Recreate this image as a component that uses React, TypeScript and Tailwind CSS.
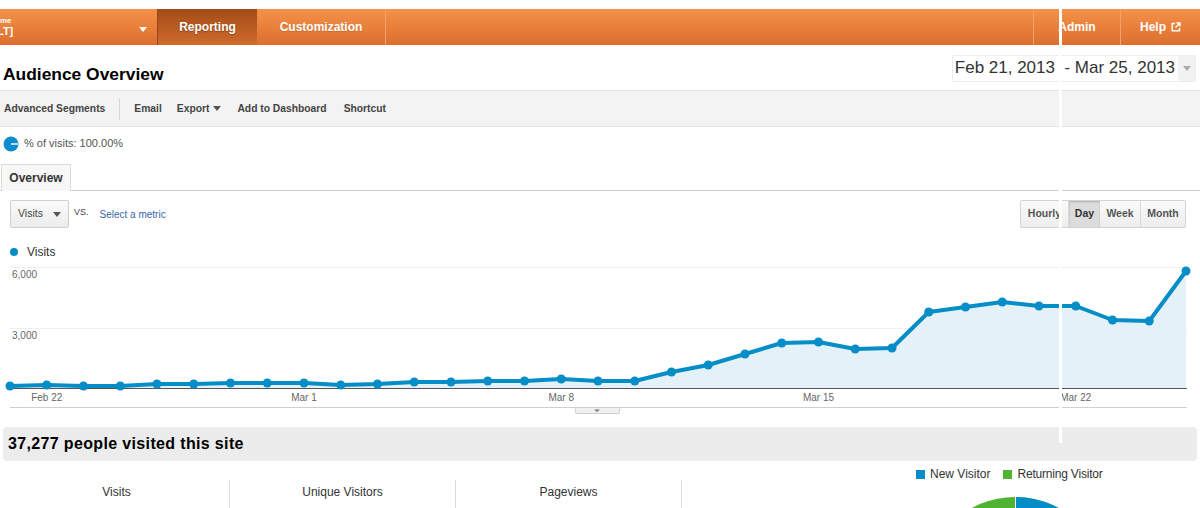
import React from "react";

const ys = [386,385,386,386,384,384,383,383,383,385,384,382,382,381,381,379,381,381,372,365,354,343,342,349,348,312,307,302,306,306,320,321,271];
const TOP = 258;
const pts = ys.map((y, i) => [10 + i * 36.75, y - TOP] as [number, number]);
const base = 388 - TOP;

function Chart() {
  const line = pts.map((p) => `${p[0].toFixed(2)},${p[1]}`).join(" ");
  const area = `10,${base} ${line} ${pts[pts.length - 1][0].toFixed(2)},${base}`;
  const xl: [string, number][] = [["Feb 22", 1], ["Mar 1", 8], ["Mar 8", 15], ["Mar 15", 22], ["Mar 22", 29]];
  return (
    <svg width="1200" height="160" className="block" style={{ fontFamily: "'Liberation Sans', Arial, sans-serif" }}>
      <line x1="10" x2="1187" y1="9.5" y2="9.5" stroke="#eeeeee" />
      <line x1="10" x2="1187" y1="70.5" y2="70.5" stroke="#eeeeee" />
      <polygon points={area} fill="#e5f1f9" />
      <line x1="10" x2="1187" y1={base + 0.5} y2={base + 0.5} stroke="#555" strokeWidth="1" />
      <polyline points={line} fill="none" stroke="#058dc7" strokeWidth="4" strokeLinejoin="round" />
      {pts.map((p, i) => (
        <circle key={i} cx={p[0]} cy={p[1]} r="4.5" fill="#058dc7" />
      ))}
      <text x="12" y="20" fontSize="10" fill="#666">6,000</text>
      <text x="12" y="81" fontSize="10" fill="#666">3,000</text>
      {xl.map(([t, i]) => (
        <text key={t} x={10 + i * 36.75} y="143" fontSize="10" fill="#666" textAnchor="middle">{t}</text>
      ))}
      <line x1="10" x2="1187" y1="149.5" y2="149.5" stroke="#cfcfcf" />
      <rect x="575.5" y="149.5" width="44" height="6" fill="#f0f0f0" stroke="#cfcfcf" rx="1" />
      <path d="M594 151.5 L600 151.5 L597 154 Z" fill="#777" />
    </svg>
  );
}

function Caret({ color = "#fff" }: { color?: string }) {
  return (
    <svg width="8" height="5" viewBox="0 0 8 5" className="block">
      <path d="M0 0 H8 L4 5 Z" fill={color} />
    </svg>
  );
}

export default function App() {
  return (
    <div className="relative w-[1200px] h-[508px] overflow-hidden bg-white font-['Liberation_Sans',Arial,sans-serif] text-[#333]">
      <div className="h-[9px]" />
      {/* Top nav */}
      <div className="h-[36px] flex bg-gradient-to-b from-[#f4914a] to-[#dc6f2d] text-white font-bold text-[12px]">
        <div className="w-[157px] relative flex items-center">
          <div className="flex flex-col leading-none">
            <span className="text-[8px]">me</span>
            <span className="text-[11px] -ml-[3px] mt-[1px]">LT]</span>
          </div>
          <div className="absolute left-[139px] top-[18px]"><Caret /></div>
        </div>
        <div className="w-[100px] flex items-center justify-center bg-gradient-to-b from-[#a24c17] to-[#d06b2c] border-l border-[#9a4714] [text-shadow:0_1px_1px_rgba(0,0,0,0.3)]">
          Reporting
        </div>
        <div className="w-[129px] flex items-center justify-center border-r border-[#f5a26a] [text-shadow:0_1px_1px_rgba(0,0,0,0.15)]">
          Customization
        </div>
        <div className="flex-1" />
        <div className="w-[87px] flex items-center justify-center border-l border-[#f5a26a]">Admin</div>
        <div className="w-[80px] flex items-center justify-center gap-[5px] border-l border-[#f5a26a]">
          <span>Help</span>
          <svg width="10" height="10" viewBox="0 0 10 10" fill="none" stroke="#fff" strokeWidth="1.4">
            <path d="M4 1.5 H1.2 V8.8 H8.5 V6" />
            <path d="M5.5 1 H9 V4.5 M9 1 L4.5 5.5" />
          </svg>
        </div>
      </div>
      {/* Title row */}
      <div className="h-[45px] flex items-center justify-between pl-[3px] pr-[4px]">
        <h1 className="text-[17.4px] font-bold text-black mt-[13px]">Audience Overview</h1>
        <div className="h-[27px] mt-[1px] flex items-stretch border border-[#ececec] rounded-[2px]">
          <span className="flex items-center pl-[2px] pr-[3px] text-[17px] text-[#333]">Feb 21, 2013&nbsp; - Mar 25, 2013</span>
          <span className="w-[17px] bg-[#f2f2f2] flex items-center justify-center"><Caret color="#aaa" /></span>
        </div>
      </div>
      {/* Toolbar */}
      <div className="h-[37px] flex items-center bg-[#f3f3f3] border-t border-b border-[#e2e2e2] text-[10.3px] font-bold text-[#444]">
        <span className="pl-[4px]">Advanced Segments</span>
        <span className="ml-[14px] w-px h-[22px] bg-[#d6d6d6]" />
        <span className="ml-[14px]">Email</span>
        <span className="ml-[15px] flex items-center gap-[4px]">Export <Caret color="#555" /></span>
        <span className="ml-[16px]">Add to Dashboard</span>
        <span className="ml-[17px]">Shortcut</span>
      </div>
      {/* Segment row */}
      <div className="h-[34px] flex items-center pl-[3px] pb-[1px]">
        <svg width="16" height="16" viewBox="0 0 16 16">
          <circle cx="8" cy="8" r="7.5" fill="#0e8ccb" />
          <rect x="8" y="7.3" width="7" height="1.4" fill="#fff" />
        </svg>
        <span className="ml-[5px] text-[11px] text-[#555]">% of visits: 100.00%</span>
      </div>
      {/* Tabs */}
      <div className="h-[27px] flex items-end border-b border-[#d0d0d0] mt-[3px]">
        <div className="ml-[1px] h-[27px] w-[70px] flex items-center justify-center border border-b-0 border-[#dcdcdc] bg-[#f7f7f7] text-[12px] font-bold text-[#333] -mb-px">
          Overview
        </div>
      </div>
      {/* Controls */}
      <div className="h-[38px] flex items-center justify-between pl-[10px] pr-[14px] pt-[8px]">
        <div className="flex items-center">
          <div className="w-[59px] h-[28px] flex items-center justify-center gap-[10px] border border-[#cfcfcf] rounded-[2px] bg-gradient-to-b from-[#fafafa] to-[#ececec] text-[10.5px] text-[#444]">
            Visits <Caret color="#555" />
          </div>
          <span className="ml-[5px] -mt-[2px] text-[9px] text-[#444]">VS.</span>
          <span className="ml-[11px] text-[10px] text-[#3a66a8]">Select a metric</span>
        </div>
        <div className="h-[28px] flex border border-[#d3d3d3] rounded-[2px] bg-gradient-to-b from-[#fafafa] to-[#ededed] text-[10.5px] font-bold text-[#555]">
          <span className="w-[48px] flex items-center justify-center border-r border-[#d8d8d8]">Hourly</span>
          <span className="w-[31px] flex items-center justify-center bg-[#dcdcdc] shadow-[inset_0_1px_2px_rgba(0,0,0,0.2)] text-[#333]">Day</span>
          <span className="w-[41px] flex items-center justify-center border-r border-[#d8d8d8]">Week</span>
          <span className="w-[44px] flex items-center justify-center">Month</span>
        </div>
      </div>
      {/* Legend */}
      <div className="h-[12px] flex items-center pl-[10px] mt-[17px]">
        <span className="w-[8px] h-[8px] rounded-full bg-[#058dc7]" />
        <span className="ml-[9px] text-[12px] text-[#333]">Visits</span>
      </div>
      {/* Chart */}
      <Chart />
      {/* Summary */}
      <div className="mt-[9px] mx-[3px] h-[34px] rounded-[4px] bg-[#ececec] flex items-center pl-[5px]">
        <span className="text-[16px] font-bold text-black tracking-[0.35px]">37,277 people visited this site</span>
      </div>
      {/* Bottom */}
      <div className="flex">
        <div className="flex flex-col">
          <div className="h-[19px]" />
          <div className="flex h-[30px]">
            <div className="w-[230px] flex justify-center pt-[3px] pl-[4px] text-[12px] text-[#333] border-r border-[#dcdcdc]">Visits</div>
            <div className="w-[226px] flex justify-center pt-[3px] text-[12px] text-[#333] border-r border-[#dcdcdc]">Unique Visitors</div>
            <div className="w-[226px] flex justify-center pt-[3px] text-[12px] text-[#333] border-r border-[#dcdcdc]">Pageviews</div>
          </div>
        </div>
        <div className="flex-1 flex flex-col items-start pl-[234px]">
          <div className="h-[24px] flex items-center gap-[5px] text-[12px] text-[#333] mt-[1px]">
            <span className="w-[9px] h-[9px] bg-[#058dc7]" />
            <span>New Visitor</span>
            <span className="ml-[8px] w-[9px] h-[9px] bg-[#50b432]" />
            <span className="tracking-[-0.2px]">Returning Visitor</span>
          </div>
          <svg width="200" height="30" className="-ml-[1px] mt-[11px]">
            <circle cx="100" cy="90" r="90" fill="#50b432" />
            <path d="M100 90 L100 0 A90 90 0 1 1 20 50 Z" fill="#058dc7" />
            <line x1="100.5" y1="0" x2="100.5" y2="30" stroke="#fff" strokeWidth="1" />
          </svg>
        </div>
      </div>
      {/* white vertical artifact */}
      <div className="absolute left-[1059px] top-0 w-[3px] h-[443px] bg-white" />
    </div>
  );
}
